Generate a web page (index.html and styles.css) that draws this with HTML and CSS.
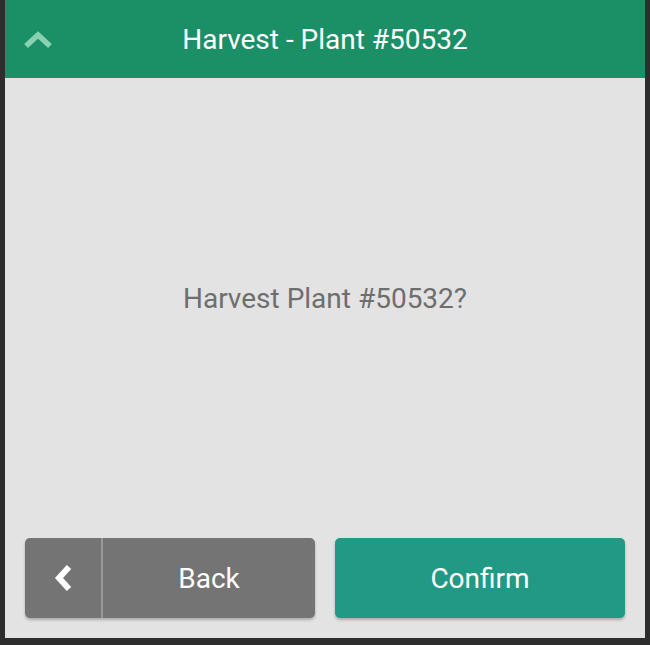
FILE: index.html
```html
<!DOCTYPE html>
<html lang="en">
<head>
  <meta charset="UTF-8">
  <title>Harvest</title>
  <link rel="stylesheet" href="styles.css">
</head>
<body>
  <div class="pantalla">
    <div class="cabecera">
      <button class="plegar" aria-label="Collapse">
        <svg width="28" height="18" viewBox="0 0 28 18"><path d="M2 15 L14 4 L26 15" fill="none" stroke="currentColor" stroke-width="5.5"/></svg>
      </button>
      <h1>Harvest - Plant #50532</h1>
    </div>
    <div class="mensaje">
      <p>Harvest Plant #50532?</p>
    </div>
    <div class="acciones">
      <button class="boton gris">
        <span class="icono">
          <svg width="20" height="28" viewBox="0 0 20 28"><path d="M15 3 L5 14 L15 25" fill="none" stroke="currentColor" stroke-width="6"/></svg>
        </span>
        <span class="texto">Back</span>
      </button>
      <button class="boton verde">Confirm</button>
    </div>
  </div>
</body>
</html>
```

FILE: styles.css
```css
html, body { margin: 0; height: 100%; }
body { background: #2d2d2d; font-family: Roboto, "Liberation Sans", sans-serif; padding: 0 5px 7px 5px; box-sizing: border-box; }
.pantalla { background: #e3e3e3; height: 100%; display: flex; flex-direction: column; }
.cabecera { background: #1b8f66; height: 78px; display: flex; align-items: center; justify-content: center; position: relative; flex-shrink: 0; }
.cabecera h1 { margin: 0; color: #fff; font-size: 28px; font-weight: 400; }
.plegar { position: absolute; left: 19px; top: 31px; background: none; border: none; padding: 0; color: #88d2b1; }
.plegar svg { display: block; }
.mensaje { flex: 1; display: flex; align-items: center; justify-content: center; padding-bottom: 20px; }
.mensaje p { margin: 0; color: #6e6e6e; font-size: 28px; }
.acciones { display: flex; gap: 20px; padding: 0 20px 20px 20px; }
.boton { flex: 1; height: 80px; border: none; border-radius: 5px; color: #fff; font-family: inherit; font-size: 28px; padding: 0; box-shadow: 0 2px 3px rgba(0,0,0,0.25); display: flex; align-items: center; justify-content: center; }
.gris { background: #747474; }
.verde { background: #219984; }
.icono { width: 78px; height: 100%; border-right: 2px solid #9a9a9a; display: flex; align-items: center; justify-content: center; box-sizing: border-box; padding-left: 2px; }
.icono svg { display: block; }
.texto { flex: 1; text-align: center; }
```
